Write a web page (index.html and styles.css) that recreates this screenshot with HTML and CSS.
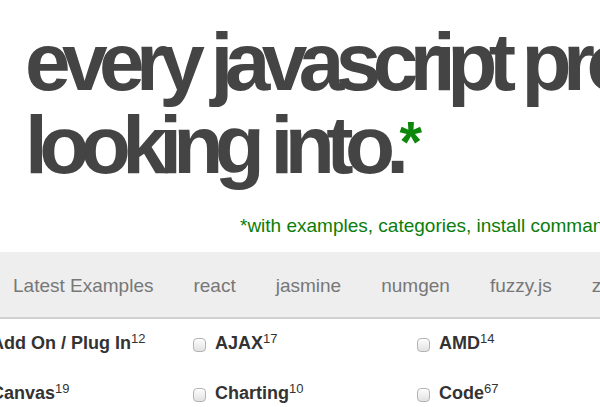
FILE: index.html
```html
<!DOCTYPE html>
<html>
<head>
<meta charset="utf-8">
<link rel="stylesheet" href="styles.css">
</head>
<body>
<div class="page">
  <h1 class="title">every javascript project worth<br>looking into.<span class="star">*</span></h1>
  <p class="subtitle">*with examples, categories, install commands and more</p>
  <nav class="nav">
    <span class="nav-item">Latest Examples</span>
    <span class="nav-item">react</span>
    <span class="nav-item">jasmine</span>
    <span class="nav-item">numgen</span>
    <span class="nav-item">fuzzy.js</span>
    <span class="nav-item">zepto</span>
  </nav>
  <div class="cats">
    <label class="cat"><span class="box"></span><span class="name">Add On / Plug In<sup>12</sup></span></label>
    <label class="cat"><span class="box"></span><span class="name">AJAX<sup>17</sup></span></label>
    <label class="cat"><span class="box"></span><span class="name">AMD<sup>14</sup></span></label>
    <label class="cat"><span class="box"></span><span class="name">Canvas<sup>19</sup></span></label>
    <label class="cat"><span class="box"></span><span class="name">Charting<sup>10</sup></span></label>
    <label class="cat"><span class="box"></span><span class="name">Code<sup>67</sup></span></label>
  </div>
</div>
</body>
</html>
```
FILE: styles.css
```css
html, body {
  margin: 0;
  padding: 0;
  background: #fff;
}
body {
  width: 600px;
  height: 407px;
  overflow: hidden;
  font-family: "Liberation Sans", Arial, Helvetica, sans-serif;
}
.page {
  width: 600px;
  overflow: hidden;
}
.title {
  margin: 20px 0 0 0;
  padding-left: 25px;
  font-size: 82px;
  line-height: 83px;
  font-weight: bold;
  letter-spacing: -8.6px;
  color: #444;
  white-space: nowrap;
}
.star {
  color: #0b870b;
  font-size: 58px;
  line-height: 0;
  letter-spacing: 0;
  margin-left: -1px;
  vertical-align: 11px;
}
.subtitle {
  margin: 29px 0 0 0;
  padding-left: 240px;
  font-size: 19px;
  line-height: 22px;
  color: #0a7d0a;
  white-space: nowrap;
}
.nav {
  margin-top: 15px;
  height: 67px;
  box-sizing: border-box;
  padding-top: 23px;
  background: #eee;
  border-bottom: 2px solid #d0d0d0;
  display: flex;
  white-space: nowrap;
  margin-left: -7px;
}
.nav-item {
  padding: 0 20px;
  font-size: 19px;
  line-height: 22px;
  color: #777;
  flex: none;
}
.cats {
  display: grid;
  grid-template-columns: repeat(3, 224px);
  row-gap: 28px;
  margin-left: -31px;
  padding-top: 13px;
}
.cat {
  display: flex;
  align-items: center;
  gap: 9px;
  font-size: 18px;
  line-height: 22px;
  font-weight: bold;
  color: #333;
  white-space: nowrap;
}
.box {
  width: 13px;
  height: 14px;
  box-sizing: border-box;
  border: 1px solid #b4b4b4;
  border-radius: 4px;
  background: linear-gradient(#fdfdfd, #e2e2e2);
  flex: none;
  margin-top: 3px;
}
.cat sup {
  font-size: 13px;
  font-weight: normal;
  vertical-align: 6px;
  line-height: 0;
}
```
